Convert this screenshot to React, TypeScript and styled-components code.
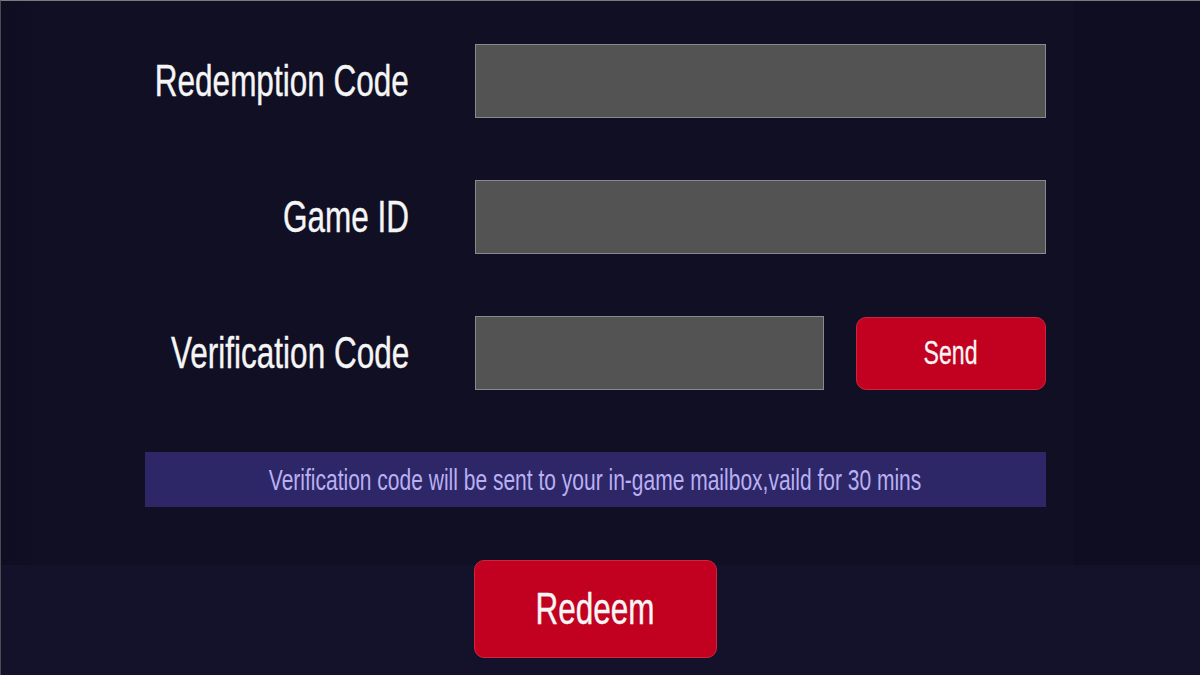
import styled, { createGlobalStyle } from "styled-components";

const colors = {
  PAGE_TOP: "#110f24",
  PAGE_EDGE: "#0e0d21",
  PAGE_BOTTOM: "#14112a",
  FIELD: "#535353",
  FIELD_BORDER: "#8a8a8e",
  RED: "#c20020",
  RED_EDGE: "#d0233f",
  NOTICE: "#2d2667",
  NOTICE_TEXT: "#b9b0f2",
  TEXT: "#f5f5f5",
};

const GlobalStyle = createGlobalStyle`
  html, body {
    margin: 0;
    padding: 0;
    background: ${colors.PAGE_TOP};
  }
  body {
    font-family: "Liberation Sans", Arial, sans-serif;
  }
`;

const App = () => {
  return (
    <>
      <GlobalStyle />
      <Styled.Page>
        <Styled.Form>
          <Styled.Label>
            <Styled.Squeezed $origin="right">Redemption Code</Styled.Squeezed>
          </Styled.Label>
          <Styled.Field />

          <Styled.Label>
            <Styled.Squeezed $origin="right">Game ID</Styled.Squeezed>
          </Styled.Label>
          <Styled.Field />

          <Styled.Label>
            <Styled.Squeezed $origin="right">Verification Code</Styled.Squeezed>
          </Styled.Label>
          <Styled.CodeRow>
            <Styled.Field />
            <Styled.SendButton type="button">
              <Styled.Squeezed>Send</Styled.Squeezed>
            </Styled.SendButton>
          </Styled.CodeRow>

          <Styled.Notice>
            <Styled.Squeezed>
              Verification code will be sent to your in-game mailbox,vaild for
              30 mins
            </Styled.Squeezed>
          </Styled.Notice>
        </Styled.Form>

        <Styled.RedeemButton type="button">
          <Styled.Squeezed>Redeem</Styled.Squeezed>
        </Styled.RedeemButton>
      </Styled.Page>
    </>
  );
};

const Styled = {
  Page: styled.div`
    box-sizing: border-box;
    width: 1200px;
    height: 675px;
    overflow: hidden;
    display: flex;
    flex-direction: column;
    align-items: flex-start;
    padding: 43px 0 0 144px;
    border-top: 1px solid #7a7a80;
    border-left: 1px solid #4a4a55;
    background:
      linear-gradient(
          to right,
          ${colors.PAGE_EDGE} 0,
          ${colors.PAGE_TOP} 40px,
          ${colors.PAGE_TOP} 1072px,
          ${colors.PAGE_EDGE} 1073px
        )
        0 0 / 100% 564px no-repeat,
      ${colors.PAGE_BOTTOM};
  `,

  Form: styled.div`
    display: grid;
    grid-template-columns: 264px 571px;
    grid-template-rows: repeat(3, 74px) 55px;
    column-gap: 66px;
    row-gap: 62px;
    align-items: center;
  `,

  Label: styled.div`
    display: flex;
    justify-content: flex-end;
    font-size: 45px;
    color: ${colors.TEXT};
    white-space: nowrap;
    -webkit-text-stroke: 0.4px ${colors.TEXT};
  `,

  Squeezed: styled.span<{ $origin?: string }>`
    display: inline-block;
    white-space: nowrap;
    transform: scaleX(0.7);
    transform-origin: ${(p) => p.$origin ?? "center"} center;
  `,

  Field: styled.div`
    box-sizing: border-box;
    height: 74px;
    width: 100%;
    background: ${colors.FIELD};
    border: 1px solid ${colors.FIELD_BORDER};
  `,

  CodeRow: styled.div`
    display: grid;
    grid-template-columns: 349px 190px;
    column-gap: 32px;
    align-items: center;
  `,

  SendButton: styled.button`
    box-sizing: border-box;
    height: 73px;
    display: flex;
    align-items: center;
    justify-content: center;
    padding: 0;
    border: 1px solid ${colors.RED_EDGE};
    border-radius: 10px;
    background: ${colors.RED};
    color: ${colors.TEXT};
    font-family: "Liberation Sans", Arial, sans-serif;
    font-size: 33px;
    -webkit-text-stroke: 0.3px ${colors.TEXT};
  `,

  Notice: styled.div`
    grid-column: 1 / -1;
    height: 55px;
    display: flex;
    align-items: center;
    justify-content: center;
    background: ${colors.NOTICE};
    color: ${colors.NOTICE_TEXT};
    font-size: 30px;
  `,

  RedeemButton: styled.button`
    box-sizing: border-box;
    margin: 53px 0 0 329px;
    width: 243px;
    height: 98px;
    display: flex;
    align-items: center;
    justify-content: center;
    padding: 0;
    border: 1px solid ${colors.RED_EDGE};
    border-radius: 10px;
    background: ${colors.RED};
    color: ${colors.TEXT};
    font-family: "Liberation Sans", Arial, sans-serif;
    font-size: 45px;
    -webkit-text-stroke: 0.4px ${colors.TEXT};
  `,
};

export default App;
